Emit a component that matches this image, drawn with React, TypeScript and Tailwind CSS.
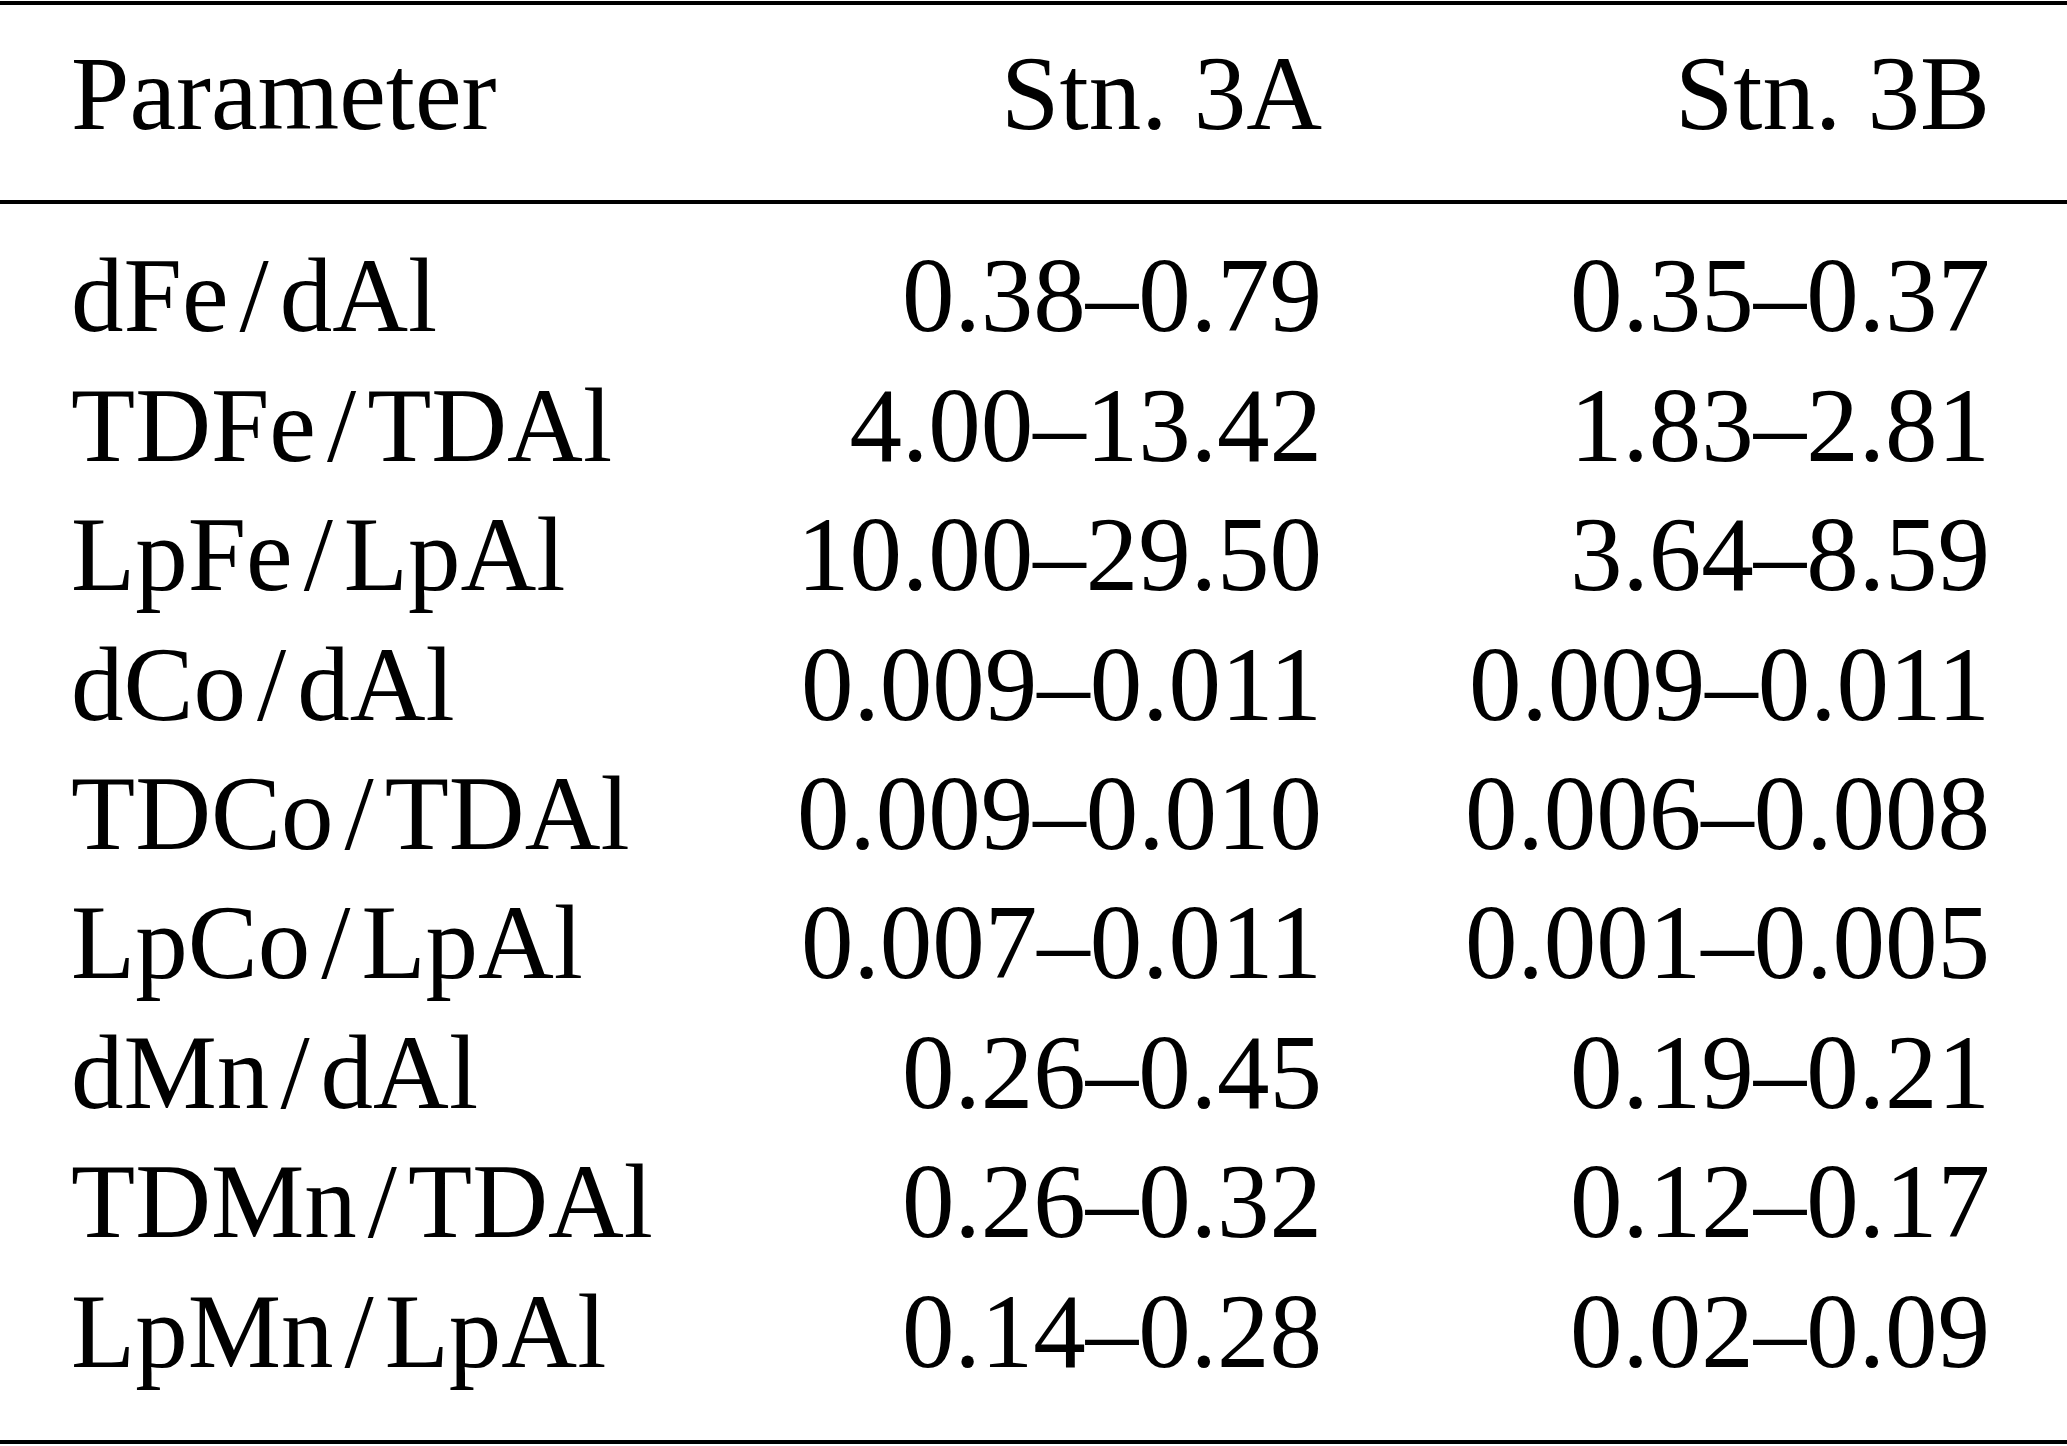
const rows: [string, string, string][] = [
  ["dFe/dAl", "0.38–0.79", "0.35–0.37"],
  ["TDFe/TDAl", "4.00–13.42", "1.83–2.81"],
  ["LpFe/LpAl", "10.00–29.50", "3.64–8.59"],
  ["dCo/dAl", "0.009–0.011", "0.009–0.011"],
  ["TDCo/TDAl", "0.009–0.010", "0.006–0.008"],
  ["LpCo/LpAl", "0.007–0.011", "0.001–0.005"],
  ["dMn/dAl", "0.26–0.45", "0.19–0.21"],
  ["TDMn/TDAl", "0.26–0.32", "0.12–0.17"],
  ["LpMn/LpAl", "0.14–0.28", "0.02–0.09"],
];

// ratio names are set with a bit of room around the slash
function Ratio({ name }: { name: string }) {
  const parts = name.split("/");
  if (parts.length < 2) return <>{name}</>;
  return (
    <>
      {parts[0]}
      <span className="mx-[11px]">/</span>
      {parts[1]}
    </>
  );
}

function Row({ cells }: { cells: [string, string, string] }) {
  return (
    <div className="flex h-[129.4px] items-start whitespace-nowrap leading-[129.4px]">
      <div className="flex-1">
        <Ratio name={cells[0]} />
      </div>
      <div className="w-[560px] text-right">{cells[1]}</div>
      <div className="w-[668px] text-right">{cells[2]}</div>
    </div>
  );
}

export default function App() {
  return (
    <div className="h-[1446px] w-[2067px] bg-white pt-px font-['Liberation_Serif','Times_New_Roman',serif] text-[105px] text-black">
      <div className="border-t-4 border-black" />
      <div className="pt-[24px] pb-[42px] pl-[71px] pr-[77px]">
        <Row cells={["Parameter", "Stn. 3A", "Stn. 3B"]} />
      </div>
      <div className="border-t-4 border-black" />
      <div className="pt-[27px] pb-[44px] pl-[71px] pr-[77px]">
        {rows.map((r) => (
          <Row key={r[0]} cells={r} />
        ))}
      </div>
      <div className="border-t-4 border-black" />
    </div>
  );
}
